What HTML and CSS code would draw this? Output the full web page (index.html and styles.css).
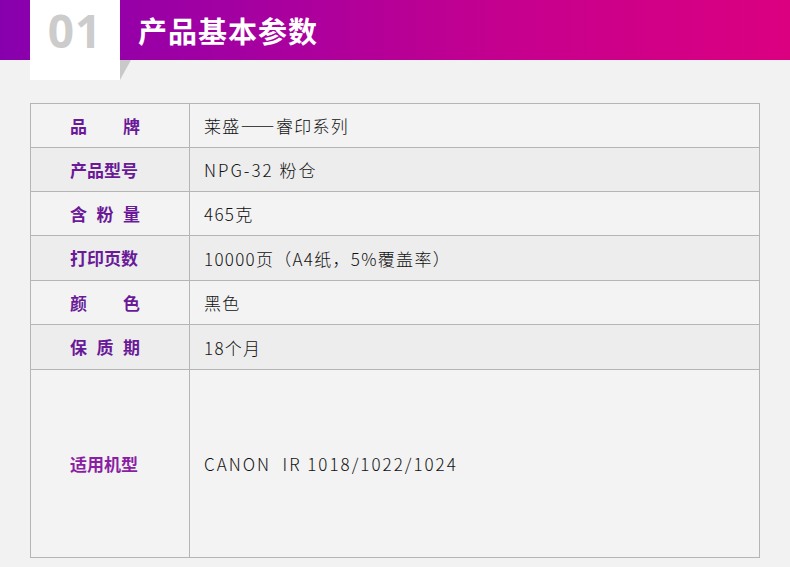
FILE: index.html
```html
<!DOCTYPE html>
<html lang="zh-CN">
<head>
<meta charset="utf-8">
<link rel="stylesheet" href="styles.css">
</head>
<body>
<header class="banner">
  <div class="num-box"><span class="num">01</span></div>
  <h1 class="title">产品基本参数</h1>
</header>
<main class="content">
  <table class="spec">
    <tr class="r-a h44"><th><span class="lbl lbl-j">品 牌</span></th><td>莱盛——睿印系列</td></tr>
    <tr class="r-b h44"><th><span class="lbl">产品型号</span></th><td class="sp">NPG-32 粉仓</td></tr>
    <tr class="r-a h44"><th><span class="lbl lbl-j">含 粉 量</span></th><td>465克</td></tr>
    <tr class="r-b h45"><th><span class="lbl">打印页数</span></th><td>10000页（A4纸，5%覆盖率）</td></tr>
    <tr class="r-a h44"><th><span class="lbl lbl-j">颜 色</span></th><td>黑色</td></tr>
    <tr class="r-b h45"><th><span class="lbl lbl-j">保 质 期</span></th><td>18个月</td></tr>
    <tr class="r-a tall"><th><span class="lbl lbl-m">适用机型</span></th><td class="sp">CANON&nbsp;&nbsp;IR 1018/1022/1024</td></tr>
  </table>
</main>
</body>
</html>
```
FILE: styles.css
```css
html, body {
  margin: 0;
  padding: 0;
}
body {
  background: #f2f2f2;
  font-family: "Noto Sans CJK SC", "Noto Sans", sans-serif;
  width: 790px;
  height: 567px;
  overflow: hidden;
}
.banner {
  height: 60px;
  background: linear-gradient(90deg, #8800ae 0%, #a8009f 35%, #c6008e 65%, #db0080 100%);
  display: flex;
  align-items: flex-start;
  padding-left: 30px;
  position: relative;
}
.num-box {
  width: 90px;
  height: 80px;
  background: #ffffff;
  position: relative;
  z-index: 1;
  display: flex;
  justify-content: center;
  padding-top: 1px;
  box-sizing: border-box;
}
.num-box::after {
  content: "";
  position: absolute;
  left: 90px;
  top: 60px;
  width: 0;
  height: 0;
  border-top: 20px solid #c9c9c9;
  border-right: 11px solid transparent;
}
.num {
  font-family: "Open Sans", "Noto Sans", sans-serif;
  font-weight: 700;
  font-size: 46px;
  line-height: 58px;
  color: #cccccc;
  letter-spacing: 1px;
}
.title {
  margin: 0 0 0 18px;
  font-size: 29px;
  font-weight: 700;
  color: #ffffff;
  line-height: 60px;
  letter-spacing: 1px;
}
.content {
  padding: 43px 30px 0 30px;
}
.spec {
  width: 730px;
  border-collapse: collapse;
  border: 1px solid #ababab;
}
.spec th, .spec td {
  border: 1px solid #b5b5b5;
  padding: 0;
}
.spec th {
  width: 159px;
  text-align: left;
  padding-left: 39px;
  box-sizing: border-box;
  font-weight: 700;
}
.spec td {
  padding-left: 14px;
  font-size: 17px;
  font-weight: 300;
  color: #111111;
  letter-spacing: 1.3px;
}
.spec td.sp {
  letter-spacing: 2px;
}
.r-a { background: #f3f3f3; }
.r-b { background: #ededed; }
.h44 { height: 44px; }
.h45 { height: 45px; }
.tall { height: 188px; }
.lbl {
  display: inline-block;
  width: 70px;
  font-size: 17px;
  color: #6a1a98;
  line-height: 22px;
  white-space: nowrap;
}
.lbl-j {
  text-align: justify;
  text-align-last: justify;
}
.lbl-m {
  color: #8a1fa3;
}
```
